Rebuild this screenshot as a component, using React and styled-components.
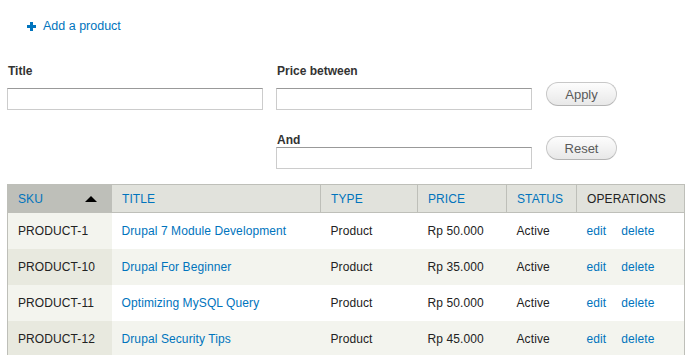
import React from "react";
import styled, { createGlobalStyle } from "styled-components";

const GlobalStyle = createGlobalStyle`
  html, body {
    margin: 0;
    padding: 0;
    background: #fff;
  }
  body {
    font-family: "Liberation Sans", Arial, sans-serif;
    font-size: 12px;
    color: #333;
  }
`;

const Page = styled.div`
  width: 693px;
  height: 355px;
  overflow: hidden;
  padding: 0 9px 0 7px;
  box-sizing: border-box;
`;

const ActionLink = styled.a`
  display: flex;
  align-items: center;
  gap: 7px;
  height: 14px;
  margin: 19px 0 0 20px;
  color: #0074bd;
  font-size: 12.5px;
  text-decoration: none;
  cursor: pointer;
`;

const Plus = styled.svg`
  width: 9px;
  height: 9px;
  fill: #0074bd;
`;

const Filters = styled.div`
  display: grid;
  grid-template-columns: 256px 256px 72px;
  column-gap: 13px;
  margin-top: 31px;
  width: 614px;
`;

const Field = styled.div`
  display: flex;
  flex-direction: column;
  padding-top: ${(p) => p.$top || 0}px;
`;

const Label = styled.label`
  font-weight: bold;
  font-size: 12px;
  color: #333;
  line-height: 15px;
  margin-bottom: ${(p) => p.$gap}px;
  padding-left: 1px;
`;

const Input = styled.input`
  box-sizing: border-box;
  width: 256px;
  height: 22px;
  border: 1px solid #ccc;
  border-top-color: #999;
  padding: 2px 4px;
  background: #fff;
  font-family: inherit;
  outline: none;
`;

const ButtonCell = styled.div`
  display: flex;
  align-items: flex-start;
  padding-top: ${(p) => p.$top}px;
  padding-left: 1px;
`;

const Button = styled.button`
  box-sizing: border-box;
  width: ${(p) => p.$w}px;
  height: 24px;
  border: 1px solid #c8c8c8;
  border-bottom-color: #b4b4b4;
  border-radius: 12px;
  background: linear-gradient(#fdfdfd, #e8e8e8);
  color: #5a5a5a;
  font-family: "Liberation Sans", Arial, sans-serif;
  font-size: 13px;
  padding: 0;
  cursor: pointer;
`;

const Table = styled.table`
  margin-top: 15px;
  width: 677px;
  border-collapse: collapse;
  table-layout: fixed;
  border: 1px solid #bebfb9;
  border-bottom: none;
`;

const Th = styled.th`
  height: 27px;
  padding: 0 10px;
  text-align: left;
  font-weight: normal;
  font-size: 12px;
  letter-spacing: 0.1px;
  text-transform: uppercase;
  background: ${(p) => (p.$active ? "#bebfb9" : "#e1e2dc")};
  border-left: 1px solid #bebfb9;
  border-bottom: 1px solid #bebfb9;
  color: ${(p) => (p.$plain ? "#222" : "#0074bd")};
  white-space: nowrap;
`;

const HeadInner = styled.div`
  display: flex;
  align-items: center;
  justify-content: space-between;
`;

const SortArrow = styled.span`
  width: 0;
  height: 0;
  margin-right: 4px;
  border-left: 6px solid transparent;
  border-right: 6px solid transparent;
  border-bottom: 6px solid #000;
`;

const Row = styled.tr`
  background: ${(p) => (p.$even ? "#f3f4ee" : "#fff")};
`;

const Td = styled.td`
  height: 36px;
  padding: 0 10px;
  font-size: 12px;
  letter-spacing: 0.1px;
  color: #222;
  white-space: nowrap;
  background: ${(p) => (p.$active ? (p.$even ? "#e8e9df" : "#f3f4ee") : "transparent")};
`;

const Link = styled.a`
  color: #0074bd;
  text-decoration: none;
  margin-right: ${(p) => p.$mr || 0}px;
  cursor: pointer;
`;

const products = [
  { sku: "PRODUCT-1", title: "Drupal 7 Module Development", price: "Rp 50.000" },
  { sku: "PRODUCT-10", title: "Drupal For Beginner", price: "Rp 35.000" },
  { sku: "PRODUCT-11", title: "Optimizing MySQL Query", price: "Rp 50.000" },
  { sku: "PRODUCT-12", title: "Drupal Security Tips", price: "Rp 45.000" },
];

const columns = [
  { label: "SKU", width: 104, active: true },
  { label: "Title", width: 209 },
  { label: "Type", width: 97 },
  { label: "Price", width: 89 },
  { label: "Status", width: 70 },
  { label: "Operations", width: 108, plain: true },
];

const App = () => (
  <Page>
    <GlobalStyle />
    <ActionLink>
      <Plus viewBox="0 0 9 9">
        <path d="M3 0h3v3h3v3H6v3H3V6H0V3h3z" />
      </Plus>
      Add a product
    </ActionLink>

    <Filters>
      <Field $top={0}>
        <Label $gap={9}>Title</Label>
        <Input type="text" />
      </Field>
      <Field $top={0}>
        <Label $gap={9}>Price between</Label>
        <Input type="text" />
      </Field>
      <ButtonCell $top={18}>
        <Button $w={71}>Apply</Button>
      </ButtonCell>

      <div />
      <Field $top={23}>
        <Label $gap={-1}>And</Label>
        <Input type="text" />
      </Field>
      <ButtonCell $top={26}>
        <Button $w={73}>Reset</Button>
      </ButtonCell>
    </Filters>

    <Table>
      <colgroup>
        {columns.map((c) => (
          <col key={c.label} style={{ width: c.width }} />
        ))}
      </colgroup>
      <thead>
        <tr>
          {columns.map((c) => (
            <Th key={c.label} $active={c.active} $plain={c.plain}>
              {c.active ? (
                <HeadInner>
                  <span>{c.label}</span>
                  <SortArrow />
                </HeadInner>
              ) : (
                c.label
              )}
            </Th>
          ))}
        </tr>
      </thead>
      <tbody>
        {products.map((p, i) => {
          const even = i % 2 === 1;
          return (
            <Row key={p.sku} $even={even}>
              <Td $active $even={even}>{p.sku}</Td>
              <Td>
                <Link>{p.title}</Link>
              </Td>
              <Td>Product</Td>
              <Td>{p.price}</Td>
              <Td>Active</Td>
              <Td>
                <Link $mr={15}>edit</Link>
                <Link>delete</Link>
              </Td>
            </Row>
          );
        })}
      </tbody>
    </Table>
  </Page>
);

export default App;
